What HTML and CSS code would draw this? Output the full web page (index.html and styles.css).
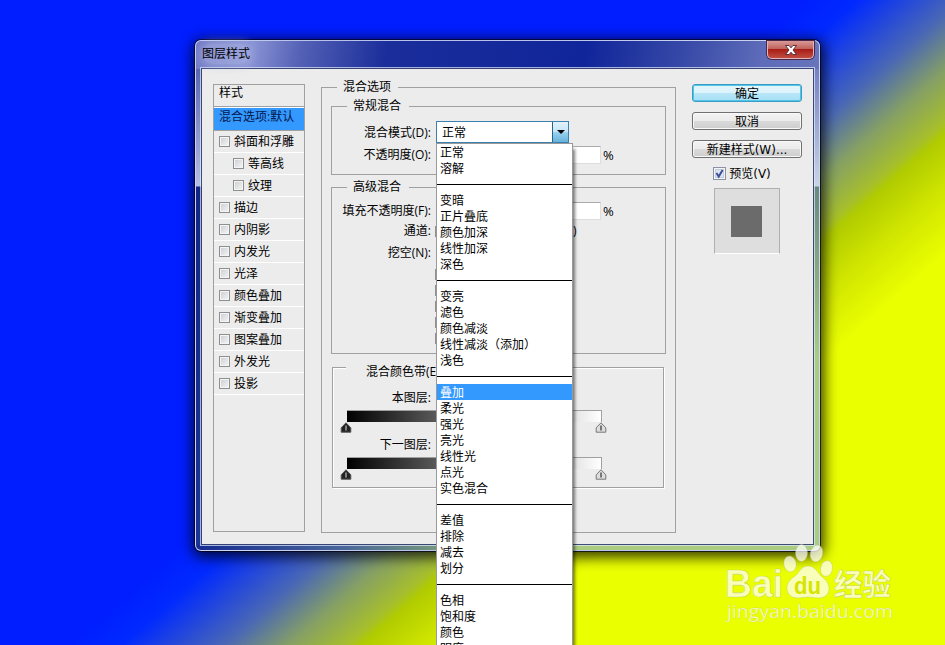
FILE: index.html
```html
<!DOCTYPE html>
<html lang="zh-CN">
<head>
    <meta charset="UTF-8">
    <meta name="viewport" content="width=device-width, initial-scale=1.0">
    <title>图层样式</title>
    <link rel="stylesheet" href="styles.css">
</head>
<body>
    <div class="dialog">
        <div class="titlebar">
            <h1>图层样式</h1>
            <button class="close" aria-label="关闭">
                <svg width="14" height="12" viewBox="0 0 14 12">
                    <path d="M1.5 1.5h3.6L7 3.8l1.9-2.3h3.6L9 6l3.5 4.5H8.9L7 8.2l-1.9 2.3H1.5L5 6z" fill="#fff" stroke="#5c3038" stroke-width="1"/>
                </svg>
            </button>
        </div>

        <div class="content">
            <!-- Style list -->
            <div class="style-list">
                <div class="style-head">样式</div>
                <div class="style-row selected">混合选项:默认</div>
                <div class="style-row"><i class="check"></i>斜面和浮雕</div>
                <div class="style-row sub"><i class="check"></i>等高线</div>
                <div class="style-row sub"><i class="check"></i>纹理</div>
                <div class="style-row"><i class="check"></i>描边</div>
                <div class="style-row"><i class="check"></i>内阴影</div>
                <div class="style-row"><i class="check"></i>内发光</div>
                <div class="style-row"><i class="check"></i>光泽</div>
                <div class="style-row"><i class="check"></i>颜色叠加</div>
                <div class="style-row"><i class="check"></i>渐变叠加</div>
                <div class="style-row"><i class="check"></i>图案叠加</div>
                <div class="style-row"><i class="check"></i>外发光</div>
                <div class="style-row"><i class="check"></i>投影</div>
            </div>

            <!-- Blending options -->
            <div class="group options">
                <div class="legend">混合选项</div>

                <div class="group general">
                    <div class="legend">常规混合</div>
                    <div class="field mode">
                        <label>混合模式(D):</label>
                        <div class="combo">
                            <span class="combo-value">正常</span>
                            <span class="combo-arrow"></span>
                            <div class="menu">
                                <div>正常</div>
                                <div>溶解</div>
                                <hr>
                                <div>变暗</div>
                                <div>正片叠底</div>
                                <div>颜色加深</div>
                                <div>线性加深</div>
                                <div>深色</div>
                                <hr>
                                <div>变亮</div>
                                <div>滤色</div>
                                <div>颜色减淡</div>
                                <div>线性减淡（添加）</div>
                                <div>浅色</div>
                                <hr>
                                <div class="active">叠加</div>
                                <div>柔光</div>
                                <div>强光</div>
                                <div>亮光</div>
                                <div>线性光</div>
                                <div>点光</div>
                                <div>实色混合</div>
                                <hr>
                                <div>差值</div>
                                <div>排除</div>
                                <div>减去</div>
                                <div>划分</div>
                                <hr>
                                <div>色相</div>
                                <div>饱和度</div>
                                <div>颜色</div>
                                <div>明度</div>
                            </div>
                        </div>
                    </div>
                    <div class="field opacity">
                        <label>不透明度(O):</label>
                        <span class="number"></span>
                        <span class="unit">%</span>
                    </div>
                </div>

                <div class="group advanced">
                    <div class="legend">高级混合</div>
                    <div class="field fill">
                        <label>填充不透明度(F):</label>
                        <span class="number"></span>
                        <span class="unit">%</span>
                    </div>
                    <div class="field channel">
                        <label>通道:</label>
                        <i class="check"></i>
                        <span class="paren">)</span>
                    </div>
                    <div class="field knockout">
                        <label>挖空(N):</label>
                    </div>
                    <div class="flags">
                        <i class="check"></i>
                        <i class="check"></i>
                        <i class="check"></i>
                        <i class="check"></i>
                        <i class="check"></i>
                    </div>
                </div>

                <div class="group blend-if">
                    <div class="legend">混合颜色带(E)</div>
                    <div class="field"><label>本图层:</label></div>
                    <div class="ramp"></div>
                    <div class="stops">
                        <svg width="12" height="11" viewBox="0 0 12 11"><path d="M6 .8l4.8 5v4.4H1.2V5.8z" fill="#222" stroke="#555"/><path d="M6 3.5v5" stroke="#ddd"/></svg>
                        <svg width="12" height="11" viewBox="0 0 12 11"><path d="M6 .8l4.8 5v4.4H1.2V5.8z" fill="#ddd" stroke="#777"/><path d="M6 3.5v5" stroke="#111"/></svg>
                    </div>
                    <div class="field"><label>下一图层:</label></div>
                    <div class="ramp"></div>
                    <div class="stops">
                        <svg width="12" height="11" viewBox="0 0 12 11"><path d="M6 .8l4.8 5v4.4H1.2V5.8z" fill="#222" stroke="#555"/><path d="M6 3.5v5" stroke="#ddd"/></svg>
                        <svg width="12" height="11" viewBox="0 0 12 11"><path d="M6 .8l4.8 5v4.4H1.2V5.8z" fill="#ddd" stroke="#777"/><path d="M6 3.5v5" stroke="#111"/></svg>
                    </div>
                </div>
            </div>

            <!-- Buttons and preview -->
            <div class="actions">
                <button class="btn primary">确定</button>
                <button class="btn">取消</button>
                <button class="btn">新建样式(W)...</button>
                <div class="preview-toggle">
                    <svg width="13" height="13" viewBox="0 0 13 13">
                        <rect x=".5" y=".5" width="12" height="12" fill="#f4f6fa" stroke="#8a939f"/>
                        <rect x="2.5" y="2.5" width="8" height="8" fill="#dde5f3" stroke="#c3ccda"/>
                        <path d="M3.5 6l2.2 3.6L9.6 3" fill="none" stroke="#3c4f96" stroke-width="1.9"/>
                    </svg>
                    <span>预览(V)</span>
                </div>
                <div class="preview"><div class="swatch"></div></div>
            </div>
        </div>
    </div>

    <div class="watermark">
        <svg width="180" height="84" viewBox="0 0 180 84">
            <g class="mark">
                <ellipse cx="69" cy="23" rx="6.2" ry="8" transform="rotate(-12 69 23)"/>
                <ellipse cx="80.500" cy="12" rx="6" ry="8.500"/>
                <ellipse cx="95.500" cy="12.500" rx="6.200" ry="8.500" transform="rotate(12 95.500 12.500)"/>
                <ellipse cx="105.500" cy="27.500" rx="6" ry="8" transform="rotate(12 105.500 27.500)"/>
                <path d="M87 25c7 0 9 6 13 10 5 4 8 7 8 13 0 6-5 9-11 9-4 0-6-1-10-1s-6 1-10 1c-7 0-11-4-11-10s4-9 8-12c5-4 6-10 13-10z"/>
                <text x="4" y="56" class="bai" textLength="58" lengthAdjust="spacingAndGlyphs">Bai</text>
                <text x="113" y="54" class="jy" textLength="57" lengthAdjust="spacingAndGlyphs">经验</text>
                <text x="6" y="77" class="url" textLength="166" lengthAdjust="spacingAndGlyphs">jingyan.baidu.com</text>
            </g>
            <text x="73" y="53" class="du" textLength="27" lengthAdjust="spacingAndGlyphs">du</text>
        </svg>
    </div>
</body>
</html>
```
FILE: styles.css
```css
:root {
    --face: #ececec;
    --line: #a0a0a0;
    --select: #3399ff;
}

* {
    margin: 0;
    padding: 0;
    box-sizing: border-box;
}

body {
    position: relative;
    width: 945px;
    height: 645px;
    padding: 40px 0 0 195px;
    overflow: hidden;
    font-family: "Open Sans", "Noto Sans CJK SC", sans-serif;
    font-size: 12px;
    line-height: 16px;
    color: #000;
    background: linear-gradient(138.8deg, #001eff 47.8%, #0029ff 51%, #4a68b4 57.2%, #86a064 61%, #a6bf2c 64.4%, #b0cb00 65.3%, #d0e500 69%, #eaff00 73.5%);
}

.dialog {
    width: 625px;
    height: 511px;
    padding: 0 6px;
    border: 1px solid rgba(225, 232, 255, 0.8);
    border-radius: 6px;
    background:
        linear-gradient(#5865b2, #b4bfe4 117px, #112684 118px, #1c3499) 0 28px / 7px 476px no-repeat,
        linear-gradient(#7481c0, #c9d5e2 117px, #68897f 118px, #a9cd80 290px) 100% 28px / 7px 476px no-repeat,
        linear-gradient(90deg, #162b91, #47659a 23%, #72957e 38%, #a9cc80 55%) 0 100% / 100% 7px no-repeat,
        linear-gradient(100deg, #7078c4 0%, #8993d4 8%, #5360b5 15%, #1a2d9a 27%, #10259a 55%, #3547a6 68%, #5e6cb9 80%, #7481c0 100%);
    box-shadow: 0 0 0 1px rgba(0, 0, 20, 0.7), 1px 3px 14px 3px rgba(0, 0, 0, 0.8);
}

.titlebar {
    display: flex;
    justify-content: space-between;
    height: 28px;
}

.titlebar h1 {
    height: 20px;
    margin-top: 3px;
    font-size: 12px;
    font-weight: normal;
    line-height: 20px;
    border-radius: 10px;
    background: rgba(185, 192, 232, 0.4);
    box-shadow: 0 0 8px 3px rgba(185, 192, 232, 0.4);
}

.close {
    display: flex;
    align-items: center;
    justify-content: center;
    width: 47px;
    height: 18px;
    margin-right: -1px;
    border: 1px solid #e0b5bc;
    border-top: 0;
    border-radius: 0 0 5px 5px;
    background: linear-gradient(#d99a98, #c0625c 45%, #a91d16 50%, #c04c40);
    box-shadow: 0 0 0 1px #472848;
}

.content {
    display: flex;
    align-items: flex-start;
    width: 611px;
    height: 475px;
    padding: 15px 11px 0;
    background: var(--face);
    box-shadow: 0 0 0 1px rgba(15, 25, 80, 0.75), 0 0 0 2px rgba(225, 235, 255, 0.7);
}

/* Style list */
.style-list {
    width: 92px;
    height: 448px;
    border: 1px solid var(--line);
}

.style-head {
    height: 22px;
    padding-left: 5px;
    border-bottom: 1px solid var(--line);
}

.style-row {
    display: flex;
    align-items: center;
    gap: 4px;
    height: 22px;
    padding-left: 5px;
    border-bottom: 1px solid #fff;
    white-space: nowrap;
}

.style-row.sub {
    padding-left: 19px;
}

.style-row.selected {
    height: 24px;
    padding: 0 0 5px 5px;
    border-top: 1px solid #fff;
    border-bottom: 1px solid var(--line);
    background: var(--select);
    color: #06154c;
}

.check {
    flex: none;
    width: 11px;
    height: 11px;
    border: 1px solid #8e8f8f;
    background: linear-gradient(135deg, #c9cdd2, #f6f6f6);
    box-shadow: inset 0 0 0 1px #f4f4f4;
}

.style-row .check {
    margin-top: -1px;
}

/* Group boxes */
.group {
    border: 1px solid var(--line);
}

.legend {
    width: max-content;
    height: 16px;
    margin-top: -9px;
    background: var(--face);
}

.options {
    width: 355px;
    height: 446px;
    margin: 3px 0 0 16px;
    padding: 0 9px;
}

.options > .legend {
    margin-left: 15px;
    padding: 0 7px 0 6px;
    margin-left: 6px;
}

.general,
.advanced {
    width: 335px;
}

.general > .legend,
.advanced > .legend {
    margin-left: 15px;
    padding: 0 8px 0 6px;
}

.general {
    height: 69px;
    margin-top: 11px;
}

.advanced {
    height: 167px;
    margin-top: 12px;
}

.field {
    display: flex;
    align-items: center;
    height: 22px;
}

.field label {
    width: 100px;
    margin-right: 4px;
    padding-right: 1px;
    text-align: right;
    white-space: nowrap;
}

.mode {
    margin-top: 7px;
}

.mode label {
    padding-top: 1px;
}

.opacity {
    margin-top: 1px;
}

.combo {
    position: relative;
    display: flex;
    width: 133px;
    height: 22px;
    border: 1px solid #3c7fb1;
    background: #fff;
}

.combo-value {
    flex: 1;
    padding-left: 5px;
    line-height: 21px;
}

.combo-arrow {
    display: flex;
    align-items: center;
    justify-content: center;
    width: 16px;
    border-left: 1px solid #2c628b;
    background: linear-gradient(#e3f3fc, #c4e5f6 50%, #98d1ef 52%, #68b3db);
}

.combo-arrow::after {
    content: "";
    border: 4px solid transparent;
    border-top-color: #000;
    border-bottom: 0;
}

.menu {
    position: absolute;
    z-index: 2;
    top: 21px;
    left: -1px;
    width: 137px;
    height: 520px;
    border: 1px solid #999;
    background: #fff;
    box-shadow: 3px 5px 3px -1px rgba(0, 0, 0, 0.5);
}

.menu div {
    height: 16px;
    padding-left: 3px;
    line-height: 18px;
}

.menu hr {
    height: 1px;
    margin: 8px 0 7px;
    border: 0;
    background: #000;
}

.menu .active {
    background: var(--select);
    color: #fff;
}

.number {
    width: 165px;
    height: 18px;
    border: 1px solid #ddd;
    border-top-color: #aaa;
    background: #fff;
}

.unit {
    margin-left: 2px;
    font-size: 13px;
}

.fill {
    margin-top: 5px;
}

.channel {
    height: 18px;
}

.channel .check,
.flags .check {
    margin-left: -1px;
}

.paren {
    margin-left: 127px;
}

.knockout {
    height: 26px;
}

.flags {
    display: flex;
    flex-direction: column;
    gap: 5px;
    margin: 3px 0 0 104px;
}

/* Blend If */
.blend-if {
    width: 332px;
    height: 121px;
    margin: 13px 0 0 1px;
    padding-left: 13px;
    box-shadow: inset 1px 1px 0 #fff, 1px 1px 0 #fff;
}

.blend-if .legend {
    height: 18px;
    margin-top: -4px;
    padding-left: 20px;
    white-space: nowrap;
}

.blend-if .field {
    height: 20px;
    margin-top: 6px;
}

.blend-if .field label {
    width: 86px;
}

.ramp {
    width: 255px;
    height: 12px;
    margin: 2px 0 0 1px;
    border: 1px solid var(--line);
    border-width: 1px 1px 0 0;
    background: linear-gradient(90deg, #000, #fff);
}

.stops {
    display: flex;
    justify-content: space-between;
    width: 267px;
    height: 7px;
    margin-left: -6px;
}

.stops svg {
    flex: none;
}

/* Buttons */
.actions {
    display: flex;
    flex-direction: column;
    align-items: center;
    width: 110px;
    margin-left: 16px;
    font-family: "DejaVu Sans", "Noto Sans CJK SC", sans-serif;
}

.btn {
    width: 110px;
    height: 18px;
    margin-bottom: 10px;
    border: 1px solid #707070;
    border-radius: 3px;
    background: linear-gradient(#f3f3f3, #ebebeb 50%, #dadada 52%, #cdcdcd);
    box-shadow: inset 0 0 0 1px #f8f8f8;
    font: inherit;
    line-height: 18px;
}

.btn.primary {
    border-color: #3c9cc4;
    background: linear-gradient(#e6f6fc, #dcf2fb 50%, #b8e7f8 52%, #a5def5);
    box-shadow: inset 0 0 0 1px #4fc6ea;
}

.preview-toggle {
    display: flex;
    align-items: center;
    gap: 3px;
    height: 16px;
    margin: -2px 0 6px -10px;
}

.preview-toggle svg {
    margin-top: -1px;
}

.preview {
    display: flex;
    align-items: center;
    justify-content: center;
    width: 66px;
    height: 66px;
    border: 1px solid #b0b0b0;
    border-bottom-color: #fff;
    background: #dedede;
}

.swatch {
    width: 31px;
    height: 31px;
    margin-right: 1px;
    background: #6b6b6b;
}

/* Watermark over the lower right corner */
.watermark {
    position: absolute;
    top: 541px;
    left: 721px;
    width: 180px;
    height: 84px;
}

.mark {
    fill: #fff;
    fill-opacity: 0.72;
    stroke: #b4b878;
    stroke-width: 0.6;
    stroke-opacity: 0.6;
}

.bai {
    font: bold 39px "Liberation Sans", sans-serif;
}

.jy {
    font: bold 30px "Noto Sans CJK SC", sans-serif;
}

.url {
    font: 19px "Open Sans", sans-serif;
    stroke-width: 0.3;
}

.du {
    font: bold 24px "Liberation Sans", sans-serif;
    fill: #d6e400;
}
```
